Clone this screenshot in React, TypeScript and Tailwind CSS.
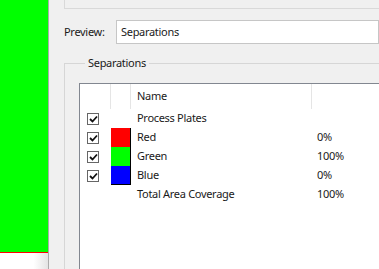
const rows = [
  { name: "Process Plates", check: true, swatch: "", pct: "" },
  { name: "Red", check: true, swatch: "bg-[#ff0000]", pct: "0%" },
  { name: "Green", check: true, swatch: "bg-[#00ff00]", pct: "100%" },
  { name: "Blue", check: true, swatch: "bg-[#0000ff]", pct: "0%" },
  { name: "Total Area Coverage", check: false, swatch: "", pct: "100%" },
];

function Check() {
  return (
    <div className="flex h-[12px] w-[12px] items-center justify-center border border-[#666] bg-white">
      <svg width="9" height="8" viewBox="0 0 9 8" fill="none">
        <path d="M1 4l2.5 2.5L8 1.5" stroke="#111" strokeWidth="1.8" />
      </svg>
    </div>
  );
}

export default function App() {
  return (
    <div className="flex h-[269px] w-[379px] overflow-hidden bg-[#f0f0f0] font-['Noto_Sans',sans-serif] text-[11px] tracking-[-0.3px] text-[#1a1a1a]">
      {/* preview canvas */}
      <div className="flex w-[49px] shrink-0 flex-col border-r border-[#ababab]">
        <div className="h-[252px] bg-[#00ff00]" />
        <div className="h-px bg-[#ff0000]" />
        <div className="flex-1 bg-gradient-to-r from-white from-70% to-[#e4e4e4]" />
      </div>

      <div className="flex flex-1 flex-col pl-[15px]">
        <div className="h-[9px] border-b border-l border-[#d9d9d9]" />

        <div className="mt-[11px] flex items-center">
          <span className="w-[52px]">Preview:</span>
          <div className="flex h-[24px] flex-1 items-center border border-[#c6c6c6] bg-white pl-[4px]">
            Separations
          </div>
        </div>

        <fieldset className="mt-[11px] flex flex-1 flex-col border-l border-t border-[#d6d6d6] pl-[14px]">
          <legend className="ml-[6px] px-[3px] leading-[16px]">Separations</legend>
          <div className="mt-[12px] flex-1 border-l border-t border-[#828790] bg-white">
            <div className="grid h-[25px] grid-cols-[31px_20px_181px_1fr]">
              <div className="border-r border-[#e5e5e5]" />
              <div className="border-r border-[#e5e5e5]" />
              <div className="flex items-center border-r border-[#e5e5e5] pl-[6px]">Name</div>
              <div />
            </div>
            {rows.map((r, i) => (
              <div key={r.name} className="grid h-[19px] grid-cols-[31px_20px_181px_1fr]">
                <div className="flex items-center pl-[7px]">{r.check && <Check />}</div>
                <div className="flex">
                  {r.swatch && (
                    <div className={`w-[20px] border-r border-black ${r.swatch} ${i === 3 ? "border-b" : ""}`} />
                  )}
                </div>
                <div className="flex items-center pl-[6px]">{r.name}</div>
                <div className="flex items-center pl-[5px]">{r.pct}</div>
              </div>
            ))}
          </div>
        </fieldset>
      </div>
    </div>
  );
}
